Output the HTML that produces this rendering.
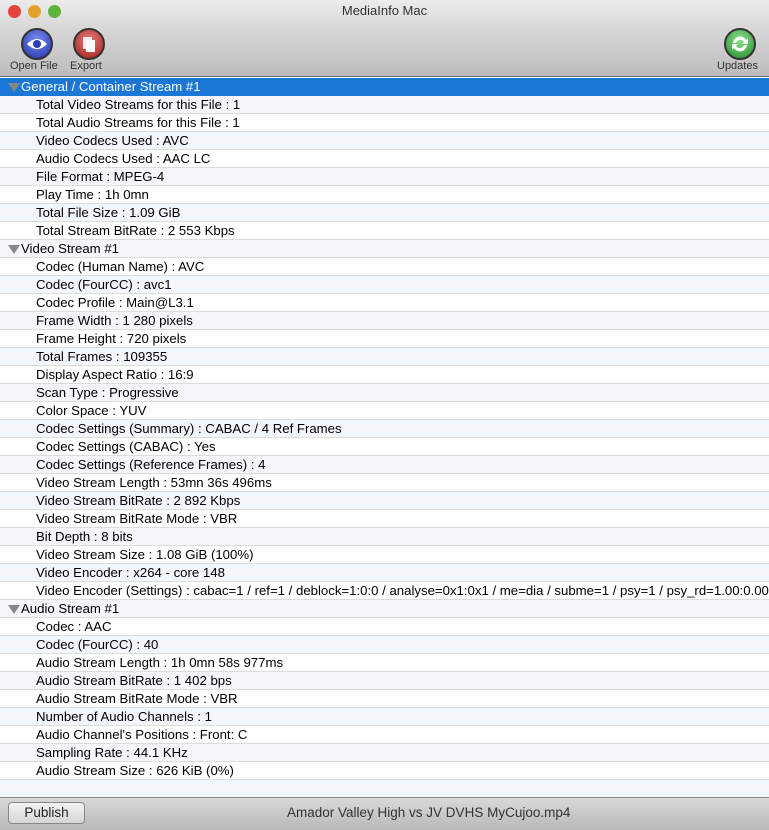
<!DOCTYPE html>
<html><head><style>
*{margin:0;padding:0;box-sizing:border-box}
body{width:769px;height:830px;overflow:hidden;font-family:"Liberation Sans",sans-serif;font-size:13.2px;color:#000;background:#fff;position:relative}
#top{position:absolute;left:0;top:0;width:769px;height:77px;background:linear-gradient(#ececec,#d6d6d6 40%,#bdbdbd);border-bottom:1px solid #6b6b6b}
.dot{position:absolute;top:5px;width:13px;height:13px;border-radius:50%}
#title{position:absolute;top:3px;left:0;width:769px;text-align:center;font-size:13px;color:#333}
.ic{position:absolute;top:28px;width:32px;height:32px;border-radius:50%;border:2px solid #333}
.lbl{position:absolute;top:60px;font-size:11px;color:#333}
#list{position:absolute;top:78px;left:0;width:769px}
.r{height:18px;line-height:17px;border-bottom:1px solid #dcdcdc;white-space:nowrap;overflow:hidden;padding-left:36px}
.r:nth-child(even){background:#f3f6fa}
.r:nth-child(odd){background:#fff}
.h{padding-left:8px}
.h:before{content:"";display:inline-block;width:0;height:0;border-left:6px solid transparent;border-right:6px solid transparent;border-top:9px solid #888;margin-right:1px;vertical-align:-1px}
.sel{background:#1b77d5!important;color:#fff;border-bottom:1px solid #1b77d5}
#bot{position:absolute;left:0;top:797px;width:769px;height:33px;background:linear-gradient(#d9d9d9,#b9b9b9);border-top:1px solid #8a8a8a}
#pub{position:absolute;left:8px;top:4px;width:77px;height:22px;border:1px solid #888;border-radius:4px;background:linear-gradient(#f4f4f4,#d4d4d4);text-align:center;line-height:20px;font-size:13.5px;color:#222}
#fn{position:absolute;left:287px;top:7px;font-size:13.5px;color:#333}
</style></head><body>
<div id="top">
<div class="dot" style="left:8px;background:#e3433b"></div>
<div class="dot" style="left:28px;background:#e3a12a"></div>
<div class="dot" style="left:48px;background:#5fb53a"></div>
<div id="title">MediaInfo Mac</div>
<div class="ic" style="left:21px;background:radial-gradient(circle at 50% 35%,#7d8ef0,#1c2fa8)"><svg width="28" height="28" viewBox="0 0 28 28"><path d="M4 14 Q14 4 24 14 Q14 24 4 14Z" fill="#fff"/><circle cx="14" cy="14" r="4" fill="#2a3fb8"/></svg></div>
<div class="lbl" style="left:10px">Open File</div>
<div class="ic" style="left:73px;background:radial-gradient(circle at 50% 35%,#e57b77,#a31d1b)"><svg width="28" height="28" viewBox="0 0 28 28"><rect x="8" y="7" width="9" height="12" fill="#eee"/><rect x="11" y="10" width="9" height="12" fill="#fff"/></svg></div>
<div class="lbl" style="left:70px">Export</div>
<div class="ic" style="left:724px;background:radial-gradient(circle at 50% 35%,#8ee08a,#1f8c2a)"><svg width="28" height="28" viewBox="0 0 28 28"><path d="M7 13 A7 7 0 0 1 20 10 L22 8 L22 14 L16 14 L18 12 A4.5 4.5 0 0 0 10 13Z M21 15 A7 7 0 0 1 8 18 L6 20 L6 14 L12 14 L10 16 A4.5 4.5 0 0 0 18 15Z" fill="#fff"/></svg></div>
<div class="lbl" style="left:717px">Updates</div>
</div>
<div id="list">
<div class="r h sel">General / Container Stream #1</div>
<div class="r">Total Video Streams for this File : 1</div>
<div class="r">Total Audio Streams for this File : 1</div>
<div class="r">Video Codecs Used : AVC</div>
<div class="r">Audio Codecs Used : AAC LC</div>
<div class="r">File Format : MPEG-4</div>
<div class="r">Play Time : 1h 0mn</div>
<div class="r">Total File Size : 1.09 GiB</div>
<div class="r">Total Stream BitRate : 2 553 Kbps</div>
<div class="r h">Video Stream #1</div>
<div class="r">Codec (Human Name) : AVC</div>
<div class="r">Codec (FourCC) : avc1</div>
<div class="r">Codec Profile : Main@L3.1</div>
<div class="r">Frame Width : 1 280 pixels</div>
<div class="r">Frame Height : 720 pixels</div>
<div class="r">Total Frames : 109355</div>
<div class="r">Display Aspect Ratio : 16:9</div>
<div class="r">Scan Type : Progressive</div>
<div class="r">Color Space : YUV</div>
<div class="r">Codec Settings (Summary) : CABAC / 4 Ref Frames</div>
<div class="r">Codec Settings (CABAC) : Yes</div>
<div class="r">Codec Settings (Reference Frames) : 4</div>
<div class="r">Video Stream Length : 53mn 36s 496ms</div>
<div class="r">Video Stream BitRate : 2 892 Kbps</div>
<div class="r">Video Stream BitRate Mode : VBR</div>
<div class="r">Bit Depth : 8 bits</div>
<div class="r">Video Stream Size : 1.08 GiB (100%)</div>
<div class="r">Video Encoder : x264 - core 148</div>
<div class="r">Video Encoder (Settings) : cabac=1 / ref=1 / deblock=1:0:0 / analyse=0x1:0x1 / me=dia / subme=1 / psy=1 / psy_rd=1.00:0.00</div>
<div class="r h">Audio Stream #1</div>
<div class="r">Codec : AAC</div>
<div class="r">Codec (FourCC) : 40</div>
<div class="r">Audio Stream Length : 1h 0mn 58s 977ms</div>
<div class="r">Audio Stream BitRate : 1 402 bps</div>
<div class="r">Audio Stream BitRate Mode : VBR</div>
<div class="r">Number of Audio Channels : 1</div>
<div class="r">Audio Channel's Positions : Front: C</div>
<div class="r">Sampling Rate : 44.1 KHz</div>
<div class="r">Audio Stream Size : 626 KiB (0%)</div>
<div class="r" style="border-bottom:0"></div>
</div>
<div id="bot"><div id="pub">Publish</div><div id="fn">Amador Valley High vs JV DVHS MyCujoo.mp4</div></div>
</body></html>
